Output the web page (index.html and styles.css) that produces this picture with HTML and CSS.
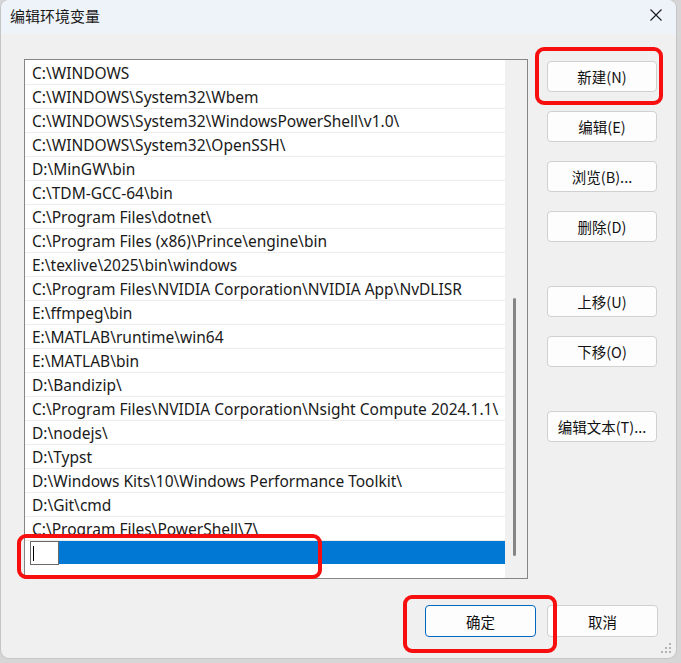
FILE: index.html
```html
<!DOCTYPE html>
<html lang="zh-CN">

<head>
    <meta charset="UTF-8">
    <meta name="viewport" content="width=device-width, initial-scale=1.0">
    <title>编辑环境变量</title>
    <link rel="stylesheet" href="styles.css">
</head>

<body>
    <div class="dialog">
        <div class="titlebar">
            <span class="title">编辑环境变量</span>
            <span class="close">
                <svg width="12" height="12" viewBox="0 0 12 12"><path d="M0.5 0.5 L11.5 11.5 M11.5 0.5 L0.5 11.5" stroke="#1a1a1a" stroke-width="1.1" fill="none"/></svg>
            </span>
        </div>

        <div class="content">
            <div class="main">
                <!-- Path list -->
                <div class="list">
                    <div class="rows">
                        <div class="row">C:\WINDOWS</div>
                        <div class="row">C:\WINDOWS\System32\Wbem</div>
                        <div class="row">C:\WINDOWS\System32\WindowsPowerShell\v1.0\</div>
                        <div class="row">C:\WINDOWS\System32\OpenSSH\</div>
                        <div class="row">D:\MinGW\bin</div>
                        <div class="row">C:\TDM-GCC-64\bin</div>
                        <div class="row">C:\Program Files\dotnet\</div>
                        <div class="row">C:\Program Files (x86)\Prince\engine\bin</div>
                        <div class="row">E:\texlive\2025\bin\windows</div>
                        <div class="row">C:\Program Files\NVIDIA Corporation\NVIDIA App\NvDLISR</div>
                        <div class="row">E:\ffmpeg\bin</div>
                        <div class="row">E:\MATLAB\runtime\win64</div>
                        <div class="row">E:\MATLAB\bin</div>
                        <div class="row">D:\Bandizip\</div>
                        <div class="row">C:\Program Files\NVIDIA Corporation\Nsight Compute 2024.1.1\</div>
                        <div class="row">D:\nodejs\</div>
                        <div class="row">D:\Typst</div>
                        <div class="row">D:\Windows Kits\10\Windows Performance Toolkit\</div>
                        <div class="row">D:\Git\cmd</div>
                        <div class="row row-cut"><span class="cut-text">C:\Program Files\PowerShell\7\</span></div>
                        <div class="row row-new">
                            <span class="edit-box"><span class="caret"></span></span>
                            <span class="selection"></span>
                        </div>
                    </div>
                    <div class="track"><div class="thumb"></div></div>
                </div>

                <div class="side">
                    <button class="btn">新建(N)</button>
                    <button class="btn">编辑(E)</button>
                    <button class="btn">浏览(B)...</button>
                    <button class="btn">删除(D)</button>
                    <button class="btn btn-group">上移(U)</button>
                    <button class="btn">下移(O)</button>
                    <button class="btn btn-group">编辑文本(T)...</button>
                </div>
            </div>

            <div class="footer">
                <button class="btn btn-wide btn-default">确定</button>
                <button class="btn btn-wide">取消</button>
            </div>
        </div>

        <!-- resize grip -->
        <svg class="grip" width="12" height="12" viewBox="0 0 12 12" fill="#b4b4b4">
            <rect x="8" y="0" width="2" height="2"/>
            <rect x="4" y="4" width="2" height="2"/>
            <rect x="8" y="4" width="2" height="2"/>
            <rect x="0" y="8" width="2" height="2"/>
            <rect x="4" y="8" width="2" height="2"/>
            <rect x="8" y="8" width="2" height="2"/>
        </svg>
    </div>

    <!-- red annotation boxes -->
    <div class="mark mark-new"></div>
    <div class="mark mark-row"></div>
    <div class="mark mark-ok"></div>
</body>

</html>
```

FILE: styles.css
```css
body {
    margin: 0;
    padding: 0;
    width: 681px;
    height: 663px;
    overflow: hidden;
    background-color: #d6d6d6;
    font-family: "Noto Sans", "Noto Sans CJK SC", sans-serif;
    color: #1a1a1a;
    position: relative;
}

.dialog {
    margin-left: 1px;
    width: 675px;
    height: 658px;
    background-color: #f0f0f0;
    border-radius: 8px;
    overflow: hidden;
    position: relative;
    box-shadow: 0 0 0 1px rgba(0, 0, 0, 0.08);
}

.titlebar {
    height: 34px;
    background-color: #eef3f9;
    display: flex;
    align-items: center;
    justify-content: space-between;
    padding: 0 14px 0 9px;
}

.title {
    font-family: "Noto Sans CJK SC", sans-serif;
    font-size: 15px;
    margin-top: -4px;
}

.close {
    display: flex;
    margin-top: -4px;
}

.content {
    padding: 25px 0 0 23px;
}

.main {
    display: flex;
    gap: 19px;
}

.list {
    width: 502px;
    height: 518px;
    border: 1px solid #858585;
    display: flex;
    background-color: #ffffff;
}

.rows {
    width: 480px;
    padding-top: 1px;
    overflow: hidden;
}

.row {
    height: 23px;
    line-height: 24px;
    border-bottom: 1px solid #ececec;
    padding-left: 7px;
    font-size: 15.5px;
    white-space: nowrap;
}

.cut-text {
    display: block;
    height: 18px;
    overflow: hidden;
}

.row-new {
    display: flex;
    padding-left: 5px;
    border-bottom: none;
}

.edit-box {
    height: 22px;
    border: 1px solid #6a6a6a;
    background-color: #ffffff;
    display: flex;
    align-items: center;
    padding-left: 2px;
    width: 25px;
}

.caret {
    width: 1px;
    height: 15px;
    background-color: #000000;
}

.selection {
    flex: 1;
    background-color: #0078d4;
}

.track {
    width: 22px;
    background-color: #f0f0f0;
}

.thumb {
    margin: 238px 0 0 8px;
    width: 3px;
    height: 258px;
    border-radius: 2px;
    background-color: #858585;
}

.side {
    display: flex;
    flex-direction: column;
    padding-top: 2px;
    gap: 19px;
}

.btn {
    width: 110px;
    height: 31px;
    background-color: #fdfdfd;
    border: 1px solid #d0d0d0;
    border-radius: 4px;
    font-family: "Noto Sans CJK SC", sans-serif;
    font-size: 14.5px;
    color: #111111;
    padding: 0;
}

.btn-group {
    margin-top: 25px;
}

.footer {
    display: flex;
    justify-content: flex-end;
    gap: 11px;
    padding-right: 18px;
    margin-top: 26px;
}

.btn-wide {
    width: 111px;
    height: 32px;
}

.btn-default {
    border-color: #0067c0;
}

.grip {
    position: absolute;
    right: 3px;
    bottom: 3px;
}

.mark {
    position: absolute;
    border: 4px solid #f70f0f;
    border-radius: 9px;
    box-sizing: border-box;
}

.mark-new {
    left: 535px;
    top: 47px;
    width: 128px;
    height: 58px;
}

.mark-row {
    left: 17px;
    top: 534px;
    width: 305px;
    height: 45px;
}

.mark-ok {
    left: 403px;
    top: 595px;
    width: 154px;
    height: 58px;
}
```
